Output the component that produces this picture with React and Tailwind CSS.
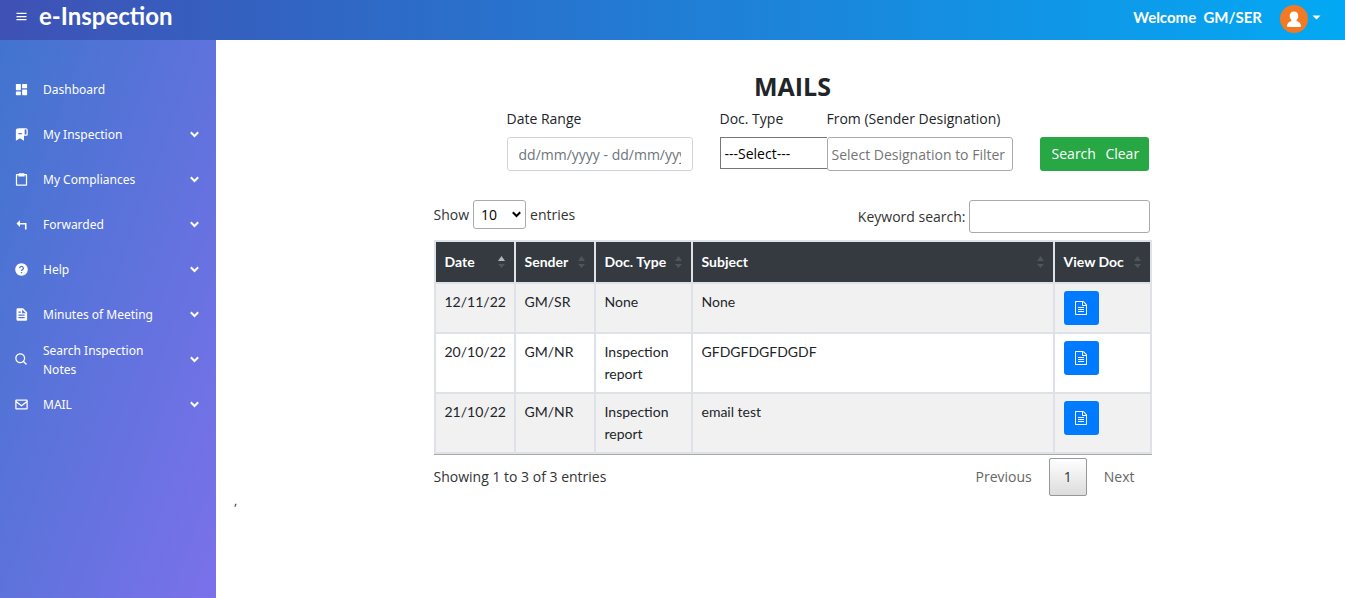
import { useState } from "react";
import { BiMenu, BiSolidDashboard, BiClipboard, BiSolidHelpCircle, BiSearch, BiEnvelope } from "react-icons/bi";

function BookmarksIcon(props) {
  return (
    <svg viewBox="0 0 24 24" fill="currentColor" {...props}>
      <path d="M19 2H8a3 3 0 0 0-1 .2C4 2.200 3 3 3 5v17l6.500-4 6.500 4v-8h4a2 2 0 0 0 2-2V5a3 3 0 0 0-3-3zm-6.500 9.500H7v-2h5.500v2zm7.500.5h-3V5a1.500 1.500 0 0 1 3 0v7z" />
    </svg>
  );
}

function ReturnArrowIcon(props) {
  return (
    <svg viewBox="0 0 24 24" fill="currentColor" {...props}>
      <path d="M9.500 5v4.500H20V20h-2.500v-8h-8v4L4 10.500z" />
    </svg>
  );
}

function DocumentIcon(props) {
  return (
    <svg viewBox="0 0 24 24" fill="currentColor" fillRule="evenodd" {...props}>
      <path d="M6 2h8.500L21 8.500V20a2 2 0 0 1-2 2H6a2 2 0 0 1-2-2V4a2 2 0 0 1 2-2zm7 2v6h6zM7 7v2h4V7zm0 5v2h10v-2zm0 4v2h10v-2z" />
    </svg>
  );
}

function ChevronIcon(props) {
  return (
    <svg viewBox="0 0 9 7" fill="none" stroke="currentColor" strokeWidth="2" {...props}>
      <path d="M0.800 1.300 4.500 5l3.700-3.700" />
    </svg>
  );
}

function FileTextIcon(props) {
  return (
    <svg viewBox="0 0 1536 1792" fill="currentColor" {...props}>
      <path d="M1468 380q28 28 48 76t20 88v1152q0 40-28 68t-68 28H96q-40 0-68-28t-28-68V96q0-40 28-68T96 0h896q40 0 88 20t76 48zM1024 136v376h376q-10-29-22-41l-313-313q-12-12-41-22zm384 1528V640H992q-40 0-68-28t-28-68V128H128v1536h1280zM384 800q0-14 9-23t23-9h704q14 0 23 9t9 23v64q0 14-9 23t-23 9H416q-14 0-23-9t-9-23v-64zm736 224q14 0 23 9t9 23v64q0 14-9 23t-23 9H416q-14 0-23-9t-9-23v-64q0-14 9-23t23-9h704zm0 256q14 0 23 9t9 23v64q0 14-9 23t-23 9H416q-14 0-23-9t-9-23v-64q0-14 9-23t23-9h704z" />
    </svg>
  );
}

function SortIcon({ active }) {
  return (
    <svg viewBox="0 0 7 13" className="h-[13px] w-[7px] shrink-0" aria-hidden="true">
      <path d="M0 5 3.500 0 7 5z" fill={active ? "#b4b6b8" : "#50555a"} />
      <path d="M0 8h7l-3.500 4z" fill="#50555a" />
    </svg>
  );
}

const menu = [
  { label: "Dashboard", Icon: BiSolidDashboard },
  { label: "My Inspection", Icon: BookmarksIcon, sub: true },
  { label: "My Compliances", Icon: BiClipboard, sub: true },
  { label: "Forwarded", Icon: ReturnArrowIcon, sub: true },
  { label: "Help", Icon: BiSolidHelpCircle, sub: true },
  { label: "Minutes of Meeting", Icon: DocumentIcon, sub: true },
  { label: "Search Inspection Notes", Icon: BiSearch, sub: true },
  { label: "MAIL", Icon: BiEnvelope, sub: true },
];

const columns = [
  { label: "Date", width: "w-[80px]" },
  { label: "Sender", width: "w-[80px]" },
  { label: "Doc. Type", width: "w-[97px]" },
  { label: "Subject", width: "" },
  { label: "View Doc", width: "w-[97px]" },
];

const mails = [
  { date: "12/11/22", sender: "GM/SR", type: "None", subject: "None" },
  { date: "20/10/22", sender: "GM/NR", type: "Inspection report", subject: "GFDGFDGFDGDF" },
  { date: "21/10/22", sender: "GM/NR", type: "Inspection report", subject: "email test" },
];

function Header() {
  return (
    <header className="flex h-10 items-start justify-between bg-linear-to-r/srgb from-[#3f51b5] to-[#03a9f4] pr-6 pl-[14px] font-[Lato,sans-serif] font-bold text-white">
      <div className="flex items-center gap-[10px]">
        <button type="button" aria-label="Toggle menu">
          <BiMenu className="size-[15px]" />
        </button>
        <a href="#home" className="text-2xl leading-8">e-Inspection</a>
      </div>
      <div className="flex items-center">
        <span className="mr-[18px] text-[15px] leading-[34px] whitespace-pre">Welcome  GM/SER</span>
        <button type="button" aria-label="Account" className="mt-1 flex items-center gap-1">
          <svg viewBox="0 0 28 28" className="size-7">
            <circle cx="14" cy="14" r="14" fill="#f27a24" />
            <path d="M14 6.500c2.700 0 4.300 1.900 4.300 4.500 0 1.600-.7 3.200-1.800 4.100v1c2.600.8 4.500 2.200 4.500 5.200 0 .5-.4.700-.9.700H7.900c-.5 0-.9-.2-.9-.7 0-3 1.900-4.400 4.500-5.200v-1c-1.100-.9-1.800-2.500-1.800-4.100 0-2.600 1.600-4.500 4.300-4.500z" fill="#fff" />
          </svg>
          <svg viewBox="0 0 9 5" className="mb-1 h-[5px] w-[9px]" fill="#fff">
            <path d="M0.500 0.500h8L4.500 4.500z" />
          </svg>
        </button>
      </div>
    </header>
  );
}

function Sidebar() {
  return (
    <nav className="w-[216px] shrink-0 bg-linear-[110deg] from-[#4174ce] to-[#7b71ea] pt-[27px] font-['Noto_Sans',sans-serif] text-xs leading-[19px] text-white">
      <ul>
        {menu.map(({ label, Icon, sub }) => (
          <li key={label}>
            <a href="#menu" className="flex h-[45px] items-center pr-[17px] pl-[14px]">
              <Icon className="mr-[14px] size-[15px] shrink-0" />
              <span className="w-[120px]">{label}</span>
              {sub && <ChevronIcon className="ml-auto h-[7px] w-[9px]" />}
            </a>
          </li>
        ))}
      </ul>
    </nav>
  );
}

function Filters() {
  return (
    <form className="flex items-end justify-end pr-[3px]" onSubmit={(e) => e.preventDefault()}>
      <div className="mr-[27px] w-[186px]">
        <label htmlFor="range" className="block h-7">Date Range</label>
        <input id="range" placeholder="dd/mm/yyyy - dd/mm/yyyy" className="h-[34px] w-full rounded-[3px] border border-[#ced4da] px-[11px] placeholder:text-[#6c757d]" />
      </div>
      <div className="w-[107px]">
        <label htmlFor="type" className="block h-7">Doc. Type</label>
        <div className="h-[34px]">
          <select id="type" className="h-8 w-full appearance-none border border-r-0 border-[#767676] px-1 pt-0.5 text-black">
            <option>---Select---</option>
          </select>
        </div>
      </div>
      <div className="mr-[27px] w-[186px]">
        <label htmlFor="from" className="block h-7 whitespace-nowrap">From (Sender Designation)</label>
        <input id="from" placeholder="Select Designation to Filter" className="h-[34px] w-full rounded-[3px] border border-[#aaa] px-1 placeholder:text-[#757575]" />
      </div>
      <div className="flex h-[34px] w-[109px] rounded-[3px] bg-[#28a745] text-white">
        <button type="submit" className="flex-1 pl-[10px]">Search</button>
        <button type="reset" className="flex-1 pr-0.5">Clear</button>
      </div>
    </form>
  );
}

function MailTable() {
  return (
    <table className="mt-[7px] w-full table-fixed border-collapse border-2 border-[#dee2e6] font-[Lato,sans-serif] leading-[22px] text-[#212529]">
      <thead>
        <tr className="h-[42px] bg-[#343a40] text-white">
          {columns.map(({ label, width }, i) => (
            <th key={label} scope="col" className={`${width} border-2 border-[#dee2e6] px-[9px] text-left font-bold whitespace-nowrap`}>
              <span className="flex items-center justify-between">
                {label}
                <SortIcon active={i === 0} />
              </span>
            </th>
          ))}
        </tr>
      </thead>
      <tbody>
        {mails.map((m) => (
          <tr key={m.date} className="align-top odd:bg-[#f1f1f1] even:bg-white">
            <td className="border-2 border-[#dee2e6] px-[9px] py-[7px]">{m.date}</td>
            <td className="border-2 border-[#dee2e6] px-[9px] py-[7px]">{m.sender}</td>
            <td className="border-2 border-[#dee2e6] px-[9px] py-[7px]">{m.type}</td>
            <td className="border-2 border-[#dee2e6] px-[9px] py-[7px]">{m.subject}</td>
            <td className="border-2 border-[#dee2e6] px-[9px] py-[7px]">
              <button type="button" aria-label="View document" className="flex h-[34px] w-[35px] items-center justify-center rounded-[3px] bg-[#007bff] text-white">
                <FileTextIcon className="h-[14px] w-3" />
              </button>
            </td>
          </tr>
        ))}
      </tbody>
    </table>
  );
}

export default function App() {
  const [keyword, setKeyword] = useState("");
  return (
    <div className="flex min-h-screen flex-col bg-white">
      <Header />
      <div className="flex flex-1">
        <Sidebar />
        <main className="min-w-0 flex-1 font-['Open_Sans',sans-serif] text-sm leading-5 text-[#212529]">
          <div className="pt-7 pl-6">
            <div className="mx-auto max-w-[718px]">
              <h1 className="mb-1 text-center text-[25px] leading-[37px] font-bold">MAILS</h1>
              <Filters />
              <div className="mt-[29px] flex items-start justify-between pr-0.5 text-[#333]">
                <label className="flex items-center gap-1">
                  Show
                  <span className="relative">
                    <select className="h-[29px] w-[53px] appearance-none rounded-[3px] border border-[#aaa] bg-white pl-[7px] text-black">
                      <option>10</option>
                    </select>
                    <ChevronIcon className="pointer-events-none absolute top-[11px] right-[5px] h-[7px] w-[9px] text-black" />
                  </span>
                  entries
                </label>
                <label className="flex items-center gap-[3px]">
                  Keyword search:
                  <input value={keyword} onChange={(e) => setKeyword(e.target.value)} className="h-[33px] w-[181px] rounded-[3px] border border-[#aaa] px-1" />
                </label>
              </div>
              <div className="border-b border-[#aaa]">
                <MailTable />
              </div>
              <div className="mt-[3px] flex items-center justify-between text-[#333]">
                <p>Showing 1 to 3 of 3 entries</p>
                <div className="flex items-center pr-[17px] text-[#666]">
                  <button type="button" className="mr-[17px]">Previous</button>
                  <button type="button" className="mr-[17px] h-[38px] w-[38px] rounded-[2px] border border-[#979797] bg-linear-to-b from-white to-[#dcdcdc] text-[#333]">1</button>
                  <button type="button">Next</button>
                </div>
              </div>
            </div>
          </div>
          <p className="pl-[18px] text-xs leading-[10px]">,</p>
        </main>
      </div>
    </div>
  );
}
